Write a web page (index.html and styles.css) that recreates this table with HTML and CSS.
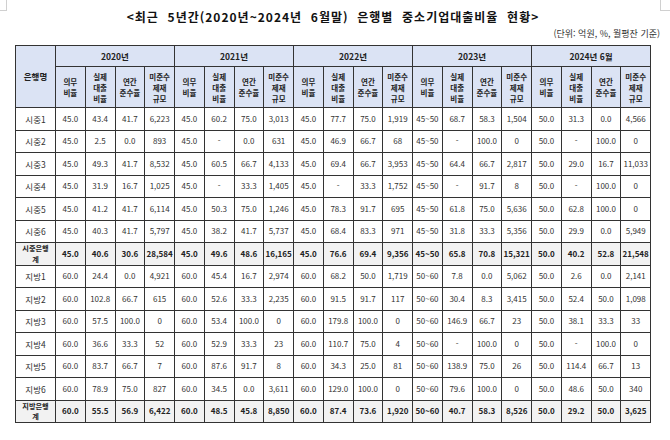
FILE: index.html
```html
<!DOCTYPE html>
<html lang="ko">
<head>
<meta charset="utf-8">
<title>은행별 중소기업대출비율 현황</title>
<link rel="stylesheet" href="styles.css">
</head>
<body>
<div class="page">
  <div class="mark mark-left"></div>
  <div class="mark mark-right"></div>
  <h1 class="title">&lt;최근&nbsp; 5년간(2020년~2024년&nbsp; 6월말)&nbsp; 은행별&nbsp; 중소기업대출비율&nbsp; 현황&gt;</h1>
  <div class="unit">(단위: 억원, %, 월평잔 기준)</div>
  <table class="grid">
    <colgroup>
      <col class="c-name">
      <col span="20" class="c-val">
    </colgroup>
    <thead>
      <tr class="h1">
        <th rowspan="2" class="name-h">은행명</th>
        <th colspan="4">2020년</th>
        <th colspan="4">2021년</th>
        <th colspan="4">2022년</th>
        <th colspan="4">2023년</th>
        <th colspan="4">2024년 6월</th>
      </tr>
      <tr class="h2">
        <th>의무<br>비율</th><th>실제<br>대출<br>비율</th><th>연간<br>준수율</th><th>미준수<br>제재<br>규모</th>
        <th>의무<br>비율</th><th>실제<br>대출<br>비율</th><th>연간<br>준수율</th><th>미준수<br>제재<br>규모</th>
        <th>의무<br>비율</th><th>실제<br>대출<br>비율</th><th>연간<br>준수율</th><th>미준수<br>제재<br>규모</th>
        <th>의무<br>비율</th><th>실제<br>대출<br>비율</th><th>연간<br>준수율</th><th>미준수<br>제재<br>규모</th>
        <th>의무<br>비율</th><th>실제<br>대출<br>비율</th><th>연간<br>준수율</th><th>미준수<br>제재<br>규모</th>
      </tr>
    </thead>
    <tbody>
      <tr><td class="name">시중1</td><td>45.0</td><td>43.4</td><td>41.7</td><td>6,223</td><td>45.0</td><td>60.2</td><td>75.0</td><td>3,013</td><td>45.0</td><td>77.7</td><td>75.0</td><td>1,919</td><td>45~50</td><td>68.7</td><td>58.3</td><td>1,504</td><td>50.0</td><td>31.3</td><td>0.0</td><td>4,566</td></tr>
      <tr><td class="name">시중2</td><td>45.0</td><td>2.5</td><td>0.0</td><td>893</td><td>45.0</td><td>-</td><td>0.0</td><td>631</td><td>45.0</td><td>46.9</td><td>66.7</td><td>68</td><td>45~50</td><td>-</td><td>100.0</td><td>0</td><td>50.0</td><td>-</td><td>100.0</td><td>0</td></tr>
      <tr><td class="name">시중3</td><td>45.0</td><td>49.3</td><td>41.7</td><td>8,532</td><td>45.0</td><td>60.5</td><td>66.7</td><td>4,133</td><td>45.0</td><td>69.4</td><td>66.7</td><td>3,953</td><td>45~50</td><td>64.4</td><td>66.7</td><td>2,817</td><td>50.0</td><td>29.0</td><td>16.7</td><td>11,033</td></tr>
      <tr><td class="name">시중4</td><td>45.0</td><td>31.9</td><td>16.7</td><td>1,025</td><td>45.0</td><td>-</td><td>33.3</td><td>1,405</td><td>45.0</td><td>-</td><td>33.3</td><td>1,752</td><td>45~50</td><td>-</td><td>91.7</td><td>8</td><td>50.0</td><td>-</td><td>100.0</td><td>0</td></tr>
      <tr><td class="name">시중5</td><td>45.0</td><td>41.2</td><td>41.7</td><td>6,114</td><td>45.0</td><td>50.3</td><td>75.0</td><td>1,246</td><td>45.0</td><td>78.3</td><td>91.7</td><td>695</td><td>45~50</td><td>61.8</td><td>75.0</td><td>5,636</td><td>50.0</td><td>62.8</td><td>100.0</td><td>0</td></tr>
      <tr><td class="name">시중6</td><td>45.0</td><td>40.3</td><td>41.7</td><td>5,797</td><td>45.0</td><td>38.2</td><td>41.7</td><td>5,737</td><td>45.0</td><td>68.4</td><td>83.3</td><td>971</td><td>45~50</td><td>31.8</td><td>33.3</td><td>5,356</td><td>50.0</td><td>29.9</td><td>0.0</td><td>5,949</td></tr>
      <tr class="total"><td class="name">시중은행<br>계</td><td>45.0</td><td>40.6</td><td>30.6</td><td>28,584</td><td>45.0</td><td>49.6</td><td>48.6</td><td>16,165</td><td>45.0</td><td>76.6</td><td>69.4</td><td>9,356</td><td>45~50</td><td>65.8</td><td>70.8</td><td>15,321</td><td>50.0</td><td>40.2</td><td>52.8</td><td>21,548</td></tr>
      <tr><td class="name">지방1</td><td>60.0</td><td>24.4</td><td>0.0</td><td>4,921</td><td>60.0</td><td>45.4</td><td>16.7</td><td>2,974</td><td>60.0</td><td>68.2</td><td>50.0</td><td>1,719</td><td>50~60</td><td>7.8</td><td>0.0</td><td>5,062</td><td>50.0</td><td>2.6</td><td>0.0</td><td>2,141</td></tr>
      <tr><td class="name">지방2</td><td>60.0</td><td>102.8</td><td>66.7</td><td>615</td><td>60.0</td><td>52.6</td><td>33.3</td><td>2,235</td><td>60.0</td><td>91.5</td><td>91.7</td><td>117</td><td>50~60</td><td>30.4</td><td>8.3</td><td>3,415</td><td>50.0</td><td>52.4</td><td>50.0</td><td>1,098</td></tr>
      <tr><td class="name">지방3</td><td>60.0</td><td>57.5</td><td>100.0</td><td>0</td><td>60.0</td><td>53.4</td><td>100.0</td><td>0</td><td>60.0</td><td>179.8</td><td>100.0</td><td>0</td><td>50~60</td><td>146.9</td><td>66.7</td><td>23</td><td>50.0</td><td>38.1</td><td>33.3</td><td>33</td></tr>
      <tr><td class="name">지방4</td><td>60.0</td><td>36.6</td><td>33.3</td><td>52</td><td>60.0</td><td>52.9</td><td>33.3</td><td>23</td><td>60.0</td><td>110.7</td><td>75.0</td><td>4</td><td>50~60</td><td>-</td><td>100.0</td><td>0</td><td>50.0</td><td>-</td><td>100.0</td><td>0</td></tr>
      <tr><td class="name">지방5</td><td>60.0</td><td>83.7</td><td>66.7</td><td>7</td><td>60.0</td><td>87.6</td><td>91.7</td><td>8</td><td>60.0</td><td>34.3</td><td>25.0</td><td>81</td><td>50~60</td><td>138.9</td><td>75.0</td><td>26</td><td>50.0</td><td>114.4</td><td>66.7</td><td>13</td></tr>
      <tr><td class="name">지방6</td><td>60.0</td><td>78.9</td><td>75.0</td><td>827</td><td>60.0</td><td>34.5</td><td>0.0</td><td>3,611</td><td>60.0</td><td>129.0</td><td>100.0</td><td>0</td><td>50~60</td><td>79.6</td><td>100.0</td><td>0</td><td>50.0</td><td>48.6</td><td>50.0</td><td>340</td></tr>
      <tr class="total"><td class="name">지방은행<br>계</td><td>60.0</td><td>55.5</td><td>56.9</td><td>6,422</td><td>60.0</td><td>48.5</td><td>45.8</td><td>8,850</td><td>60.0</td><td>87.4</td><td>73.6</td><td>1,920</td><td>50~60</td><td>40.7</td><td>58.3</td><td>8,526</td><td>50.0</td><td>29.2</td><td>50.0</td><td>3,625</td></tr>
    </tbody>
  </table>
</div>
</body>
</html>
```
FILE: styles.css
```css
html, body {
  margin: 0;
  padding: 0;
  background: #ffffff;
}
body {
  font-family: "Noto Sans CJK KR", "Noto Sans", sans-serif;
  color: #222;
}
.page {
  position: relative;
  width: 670px;
  height: 440px;
  padding-top: 8px;
  box-sizing: border-box;
}
.mark {
  position: absolute;
  top: 0;
  width: 6px;
  height: 10px;
  border-bottom: 1px solid #d0d0d0;
}
.mark-left {
  left: 0;
  border-right: 1px solid #d0d0d0;
}
.mark-right {
  left: 660px;
  width: 10px;
  border-left: 1px solid #d0d0d0;
}
.title {
  margin: 0;
  font-size: 12px;
  line-height: 18px;
  font-weight: 700;
  letter-spacing: 1px;
  text-align: center;
  color: #111;
  padding-right: 4px;
}
.unit {
  font-size: 9px;
  line-height: 12px;
  text-align: right;
  padding-right: 10px;
  margin-top: 2px;
  color: #333;
}
.grid {
  margin: 5px 0 0 15px;
  width: 635px;
  table-layout: fixed;
  border-collapse: collapse;
  border: 1px solid #222;
}
.c-name { width: 40px; }
.c-val { width: 29.75px; }
.grid th,
.grid td {
  border: 1px solid #333;
  padding: 0;
  text-align: center;
  vertical-align: middle;
  white-space: nowrap;
  overflow: hidden;
}
.grid th {
  background: #dbe3f4;
  font-weight: 700;
  color: #222;
}
.h1 th {
  height: 20px;
  font-size: 8.5px;
  line-height: 13px;
}
.h1 .name-h {
  font-size: 8.5px;
}
.h2 th {
  height: 40px;
  font-size: 7.5px;
  line-height: 11px;
}
.grid td {
  height: 21.5px;
  font-size: 8px;
  line-height: 12px;
  color: #333;
}
.grid td.name {
  font-size: 8.5px;
}
.total td {
  background: #f2f2f2;
  font-weight: 700;
  color: #222;
}
.total td.name {
  font-size: 7.2px;
  line-height: 10.5px;
}
```
